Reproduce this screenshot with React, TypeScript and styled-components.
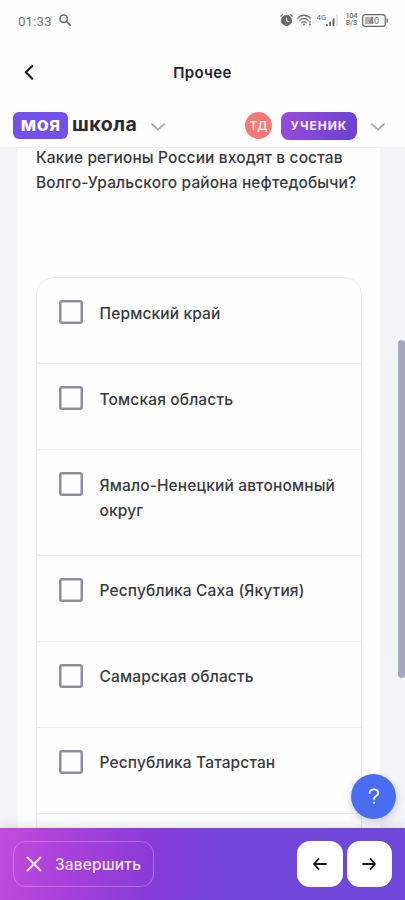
import React from 'react';
import styled, { createGlobalStyle } from 'styled-components';

const GlobalStyle = createGlobalStyle`
  * { box-sizing: border-box; }
  body { margin: 0; background: #fefefe; font-family: Inter, "Noto Sans", sans-serif; }
  button { font: inherit; padding: 0; border: 0; cursor: pointer; }
`;

const Screen = styled.div`
  position: relative;
  display: flex;
  flex-direction: column;
  width: 405px;
  height: 900px;
  overflow: hidden;
  background: #fefefe;
  color: #393941;
`;

const StatusBar = styled.div`
  display: flex;
  align-items: center;
  flex: none;
  height: 40px;
  padding: 0 17px 0 18px;
  color: #68686a;
`;

const Clock = styled.span`
  width: 41px;
  margin-top: 1px;
  font: 400 13.5px/16px Roboto, sans-serif;
  color: #77777a;
`;

const StatusIcons = styled.div`
  display: flex;
  align-items: center;
  gap: 4px;
  margin-left: auto;
`;

const NetSpeed = styled.div`
  display: flex;
  flex-direction: column;
  align-items: center;
  width: 13px;
  margin-left: 2px;
  font: 500 7px/7px Roboto, sans-serif;
`;

const TitleBar = styled.header`
  display: grid;
  grid-template-columns: 60px 1fr 60px;
  align-items: center;
  flex: none;
  height: 64px;
`;

const BackButton = styled.button`
  display: flex;
  width: 20px;
  margin: 1px 0 0 20px;
  background: none;
`;

const Title = styled.h1`
  margin: 2px 0 0;
  text-align: center;
  font-size: 15px;
  line-height: 20px;
  font-weight: 600;
  letter-spacing: 0.3px;
  color: #202027;
`;

const BrandBar = styled.div`
  display: flex;
  align-items: center;
  flex: none;
  height: 44px;
  padding: 0 20px 0 13px;
  border-bottom: 1px solid #f1f1f4;
`;

const LogoBadge = styled.span`
  width: 55px;
  height: 27px;
  border-radius: 6px;
  background: #7450ea;
  color: #fff;
  text-align: center;
  font-size: 19.5px;
  line-height: 25px;
  font-weight: 700;
  letter-spacing: 0.3px;
`;

const LogoWord = styled.span`
  width: 66px;
  margin: -2px 13px 0 4px;
  font-size: 19.5px;
  line-height: 25px;
  font-weight: 700;
  letter-spacing: 0.5px;
  white-space: nowrap;
  color: #292934;
`;

const Avatar = styled.span`
  width: 27px;
  height: 27px;
  margin-left: auto;
  border-radius: 50%;
  background: #fa7975;
  color: #ffe9e8;
  text-align: center;
  font-size: 12px;
  line-height: 27px;
  font-weight: 600;
  letter-spacing: 1.6px;
  text-indent: 1.5px;
`;

const RoleTag = styled.span`
  width: 76px;
  height: 28px;
  margin: 0 14px 0 9px;
  border-radius: 8px;
  background: linear-gradient(110deg, #9b4bdd, #6842cf);
  color: #fbf1ff;
  text-align: center;
  font-size: 12px;
  line-height: 28px;
  font-weight: 700;
  letter-spacing: 1px;
`;

const Content = styled.main`
  flex: 1;
  min-height: 0;
  overflow: hidden;
  padding: 0 25px 0 18px;
  background: #f4f4f8;
`;

const Card = styled.section`
  height: 700px;
  padding: 0 18px;
  background: #fefefe;
`;

const Question = styled.p`
  height: 129px;
  margin: 0;
  font-size: 15.5px;
  line-height: 25px;
  font-weight: 500;
  letter-spacing: 0.125px;
  white-space: nowrap;
  transform: translateY(-3px);
`;

const AnswerList = styled.div`
  border: 1px solid #ebebef;
  border-radius: 18px;
  width: 326px;
`;

const AnswerRow = styled.label<{ $height: number }>`
  display: flex;
  align-items: flex-start;
  height: ${({ $height }) => $height}px;
  padding: 22px 0 0 22px;
  border-bottom: 1px solid #ebebef;
`;

const Checkbox = styled.span`
  flex: none;
  width: 24px;
  height: 24px;
  border: 2px solid #8e8d9c;
  border-radius: 3px;
  box-shadow: inset 0 0 0 0.5px #8e8d9c;
`;

const AnswerText = styled.span`
  margin-left: 16.5px;
  padding-top: 0.5px;
  font-size: 15.5px;
  line-height: 25px;
  font-weight: 500;
  letter-spacing: 0.14px;
  white-space: pre-line;
`;

const Scrollbar = styled.div`
  position: absolute;
  top: 340px;
  right: 0;
  width: 7px;
  height: 338px;
  border-radius: 4px;
  background: #a4a8bd;
`;

const HelpButton = styled.button`
  position: absolute;
  top: 774px;
  left: 351px;
  display: flex;
  align-items: center;
  justify-content: center;
  width: 45px;
  height: 45px;
  border-radius: 50%;
  background: #496df0;
  box-shadow: 0 3px 9px rgba(50, 50, 80, 0.25);
`;

const Footer = styled.footer`
  display: flex;
  align-items: center;
  flex: none;
  height: 72px;
  padding: 0 13px;
  gap: 4px;
  background: linear-gradient(100deg, #c14cda 0%, #a840da 18%, #893bd8 37%, #7546d9 54%, #6e48d8 100%);
  box-shadow: 0 -2px 10px rgba(50, 50, 70, 0.14);
`;

const FinishButton = styled.button`
  display: flex;
  align-items: center;
  width: 141px;
  height: 46px;
  margin-right: auto;
  && {
    padding-left: 12px;
    border: 1px solid rgba(235, 170, 255, 0.45);
  }
  border-radius: 13px;
  background: transparent;
  color: #f8dfff;
`;

const FinishLabel = styled.span`
  margin-left: 13px;
  font-size: 15.5px;
  font-weight: 500;
  letter-spacing: 0.15px;
`;

const ArrowButton = styled.button`
  display: flex;
  align-items: center;
  justify-content: center;
  width: 45.5px;
  height: 46px;
  border-radius: 13px;
  background: #fff;
`;

const Stroke = styled.svg`
  display: block;
  flex: none;
  fill: none;
  stroke: currentColor;
  stroke-linecap: round;
  stroke-linejoin: round;
`;

const Glyphs = styled.text<{ $size: number }>`
  font: 400 ${({ $size }) => $size}px Roboto, sans-serif;
  fill: currentColor;
  stroke: none;
`;

const Chevron = () => (
  <Stroke width="14" height="10" viewBox="0 -2 14 10" strokeWidth="1.8" color="#a7a7aa">
    <path d="M1 1.2 7 6.7 13 1.2" />
  </Stroke>
);

const SearchIcon = () => (
  <Stroke width="12" height="12" viewBox="0 0 12 12" strokeWidth="1.6">
    <circle cx="4.7" cy="4.7" r="3.7" />
    <path d="m7.5 7.5 3.6 3.6" />
  </Stroke>
);

const AlarmIcon = () => (
  <Stroke width="13" height="14" viewBox="0 0 13 14" strokeWidth="1.2">
    <circle cx="6.5" cy="7.4" r="4.9" fill="currentColor" />
    <path d="M.8 3.2 2.5 1.600M12.2 3.200 10.500 1.600" />
    <path d="M6.5 5v2.700l1.900.9" stroke="#fff" strokeWidth="1.1" />
  </Stroke>
);

const WifiIcon = () => (
  <Stroke width="16" height="12" viewBox="0 0 16 12" strokeWidth="1.3">
    <path d="M.8 4C4.300.3 9.700.3 13.200 4M2.800 6.300c2.500-2.400 5.900-2.400 8.400 0M4.800 8.500c1.400-1.200 3-1.200 4.400 0" />
    <path d="M7 10.400v.1M13 7.800v.1M13 10.500v.1" strokeWidth="1.8" />
  </Stroke>
);

const SignalIcon = () => (
  <Stroke width="22" height="14" viewBox="0 0 22 14" strokeWidth="2">
    <Glyphs $size={8} x="-.5" y="6.700">4G</Glyphs>
    <path d="M10 12v.3M13.200 9.500v2.800M16.500 6.200v6.100" />
    <path d="M20 2v10.500" stroke="#dedee0" strokeWidth="1.5" />
  </Stroke>
);

const BatteryIcon = () => (
  <Stroke width="26" height="13" viewBox="0 0 26 13">
    <rect x=".7" y=".7" width="22.6" height="11.6" rx="2.5" strokeWidth="1.2" />
    <rect x="2.800" y="2.800" width="8" height="7.400" fill="#b4b4b6" stroke="none" />
    <path d="M25.200 5v3" strokeWidth="1.3" />
    <Glyphs $size={9} x="12" y="9.700" textAnchor="middle">40</Glyphs>
  </Stroke>
);

const answers = [
  { text: 'Пермский край', height: 86 },
  { text: 'Томская область', height: 86 },
  { text: 'Ямало-Ненецкий автономный\nокруг', height: 105.5 },
  { text: 'Республика Саха (Якутия)', height: 86 },
  { text: 'Самарская область', height: 86 },
  { text: 'Республика Татарстан', height: 86 },
  { text: '', height: 86 },
];

export default function App() {
  return (
    <>
      <GlobalStyle />
      <Screen>
        <StatusBar>
          <Clock>01:33</Clock>
          <SearchIcon />
          <StatusIcons>
            <AlarmIcon />
            <WifiIcon />
            <SignalIcon />
            <NetSpeed><span>104</span><span>B/S</span></NetSpeed>
            <BatteryIcon />
          </StatusIcons>
        </StatusBar>
        <TitleBar>
          <BackButton aria-label="Назад">
            <Stroke width="20" height="20" viewBox="0 0 20 20" strokeWidth="2.1" color="#17171c">
              <path d="M12.300 3 5.800 9.200l6.500 6.500" />
            </Stroke>
          </BackButton>
          <Title>Прочее</Title>
        </TitleBar>
        <BrandBar>
          <LogoBadge>моя</LogoBadge>
          <LogoWord>школа</LogoWord>
          <Chevron />
          <Avatar>ТД</Avatar>
          <RoleTag>УЧЕНИК</RoleTag>
          <Chevron />
        </BrandBar>
        <Content>
          <Card>
            <Question>
              Какие регионы России входят в состав<br />
              Волго-Уральского района нефтедобычи?
            </Question>
            <AnswerList>
              {answers.map((answer, index) => (
                <AnswerRow key={index} $height={answer.height}>
                  <Checkbox />
                  <AnswerText>{answer.text}</AnswerText>
                </AnswerRow>
              ))}
            </AnswerList>
          </Card>
        </Content>
        <Footer>
          <FinishButton>
            <Stroke width="16" height="16" viewBox="0 0 16 16" strokeWidth="2.1">
              <path d="m1.500 1.500 13 13M14.500 1.500l-13 13" />
            </Stroke>
            <FinishLabel>Завершить</FinishLabel>
          </FinishButton>
          <ArrowButton aria-label="Предыдущий">
            <Stroke width="14" height="14" viewBox="0 0 14 14" strokeWidth="1.8" color="#17171c">
              <path d="M13 7H1M5.500 1.800 1 7l4.500 5.200" />
            </Stroke>
          </ArrowButton>
          <ArrowButton aria-label="Следующий">
            <Stroke width="14" height="14" viewBox="0 0 14 14" strokeWidth="1.8" color="#17171c">
              <path d="M1 7h12M8.500 1.800 13 7l-4.500 5.200" />
            </Stroke>
          </ArrowButton>
        </Footer>
        <Scrollbar />
        <HelpButton aria-label="Помощь">
          <Stroke width="12" height="17" viewBox="0 0 12 17" strokeWidth="1.8" color="#f0f3ff">
            <path d="M1.700 5C1.700 2.700 3.600 1.300 6 1.300s4.300 1.400 4.300 3.600C10.300 8 6 7.800 6 11" />
            <path d="M6 14.800v.1" strokeWidth="2" />
          </Stroke>
        </HelpButton>
      </Screen>
    </>
  );
}
